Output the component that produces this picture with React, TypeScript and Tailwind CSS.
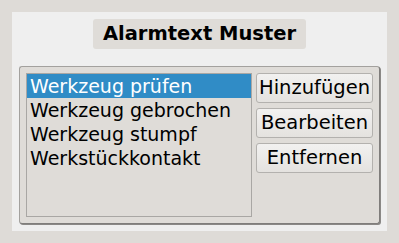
import React from 'react';

const items = ['Werkzeug prüfen', 'Werkzeug gebrochen', 'Werkzeug stumpf', 'Werkstückkontakt'];
const buttons = ['Hinzufügen', 'Bearbeiten', 'Entfernen'];

export default function App() {
  return (
    <div
      className="w-[399px] h-[243px] bg-[#dedbd7] p-[12px]"
      style={{ fontFamily: '"DejaVu Sans", sans-serif' }}
    >
      <div className="h-full bg-[#efefef] px-[7px] pt-[7px] pb-[7px] flex flex-col">
        {/* Title */}
        <div className="flex justify-center">
          <div className="h-[30px] w-[213px] rounded-[3px] bg-[#dfdcd8] flex items-center justify-center text-[19.5px] font-bold text-black">
            Alarmtext Muster
          </div>
        </div>

        {/* Group frame */}
        <div className="mt-[17px] flex-1 flex gap-[4px] rounded-[3px] border border-t-[#a3a19e] border-l-[#a3a19e] border-b-[#7f7d7b] border-r-[#7f7d7b] bg-[#dfdcd8] p-[6px] shadow-[1px_1px_0_#8a8886]">
          <div className="w-[226px] h-[144px] border border-[#a9a7a4] bg-[#dfdcd8] flex flex-col">
            {items.map((item, i) => (
              <div
                key={item}
                className={`h-[24px] leading-[24px] pl-[3px] text-[19px] whitespace-nowrap ${
                  i === 0 ? 'bg-[#308cc6] text-white' : 'text-black'
                }`}
              >
                {item}
              </div>
            ))}
          </div>

          <div className="flex flex-col gap-[5px]">
            {buttons.map((b) => (
              <button
                key={b}
                className="w-[117px] h-[30px] rounded-[3px] border border-[#b3b1ae] bg-gradient-to-b from-[#f2f1f0] to-[#e4e2df] text-[19.5px] text-black flex items-center justify-center"
              >
                {b}
              </button>
            ))}
          </div>
        </div>
      </div>
    </div>
  );
}
